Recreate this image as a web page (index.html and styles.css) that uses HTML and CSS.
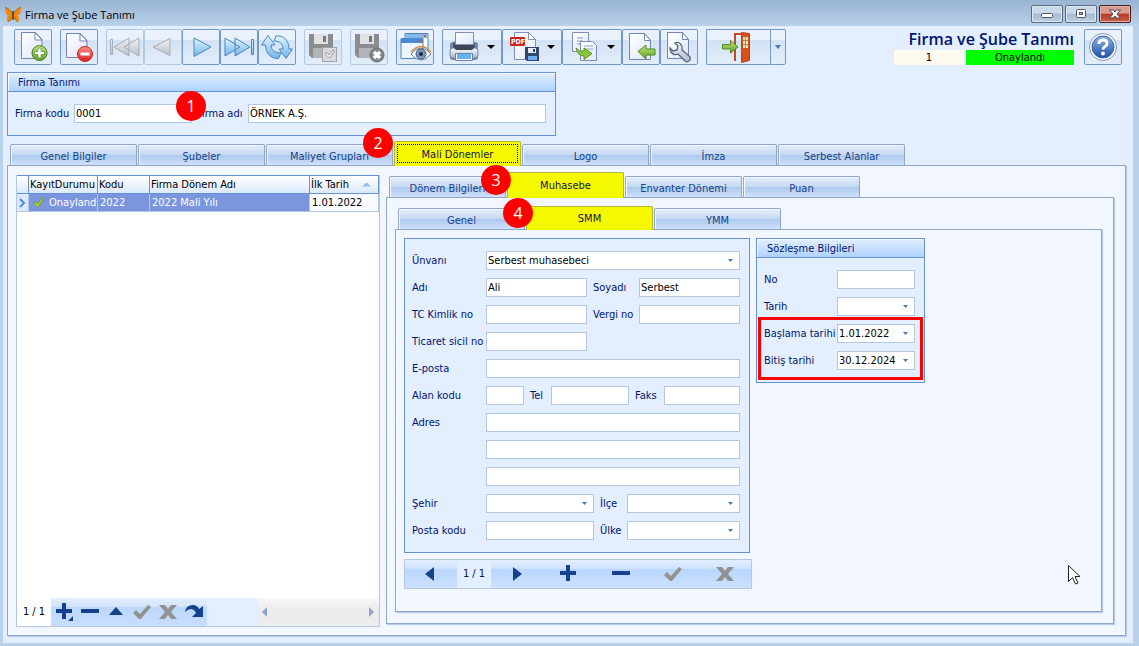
FILE: index.html
```html
<!DOCTYPE html>
<html lang="tr">
<head>
<meta charset="utf-8">
<title>Firma ve Şube Tanımı</title>
<link rel="stylesheet" href="styles.css">
</head>
<body>
<svg class="defs" aria-hidden="true">
  <defs>
    <linearGradient id="paper" x2="1" y2="1"><stop stop-color="#fff"/><stop offset="1" stop-color="#dfe6f5"/></linearGradient>
    <linearGradient id="blue" x2="0" y2="1"><stop stop-color="#e4f5ff"/><stop offset="1" stop-color="#6fb4e8"/></linearGradient>
    <linearGradient id="grey" x2="0" y2="1"><stop stop-color="#f1f2f4"/><stop offset="1" stop-color="#b9bec8"/></linearGradient>
    <linearGradient id="green" x2="0" y2="1"><stop stop-color="#c5e67a"/><stop offset="1" stop-color="#5fa322"/></linearGradient>
    <linearGradient id="red" x2="0" y2="1"><stop stop-color="#ff8f87"/><stop offset="1" stop-color="#dd2020"/></linearGradient>
    <linearGradient id="metal" x2="0" y2="1"><stop stop-color="#fafbfe"/><stop offset="1" stop-color="#a9b5cc"/></linearGradient>
    <linearGradient id="help" x2="0" y2="1"><stop stop-color="#8db5e8"/><stop offset="1" stop-color="#1f4fa8"/></linearGradient>
    <symbol id="tick" viewBox="0 0 18 16"><path d="M0 9l3-3 4 4L15 1l3 2L8 15H6z"/></symbol>
    <symbol id="cross" viewBox="0 0 18 16"><path d="M0 1h6l3 4 3-4h6l-6 7 6 7h-6l-3-4-3 4H0l6-7z"/></symbol>
  </defs>
</svg>
<div class="window">
  <header class="titlebar">
    <svg class="app-icon" viewBox="0 0 16 16" aria-hidden="true"><path d="M7.500 7C6 3 2 0 0 .5 0 5 1 8 3.500 8.500 1 10 1.500 13 3 15c2 0 4-3 4.500-5h1c.5 2 2.500 5 4.500 5 1.500-2 2-5-.5-6.500C15 8 16 5 16 .5 14 0 10 3 8.500 7z" fill="#f0890f"/><path d="M0 .5C4 1 6 4 8 8c2-4 4-7 8-7.500M3 15l4-5M13 15L9 10" fill="none" stroke="#a85a10" stroke-width=".8"/><path d="M8 4v9" stroke="#3b2817" stroke-width="1.300"/></svg>
    <span class="window-title">Firma ve Şube Tanımı</span>
    <div class="window-buttons">
      <button class="win" aria-label="Simge durumuna küçült"><svg viewBox="0 0 30 16"><rect x="9.500" y="7.500" width="11" height="4" rx="1" fill="#fff" stroke="#4c5663"/></svg></button>
      <button class="win" aria-label="Ekranı kapla"><svg viewBox="0 0 30 16"><rect x="10.500" y="3.500" width="9" height="8" rx="1" fill="#fff" stroke="#4c5663"/><rect x="13.500" y="6.500" width="3" height="2" fill="#a8bdd5" stroke="#4c5663"/></svg></button>
      <button class="win win-close" aria-label="Kapat"><svg viewBox="0 0 30 16"><path d="M9.500 4h4l1.500 2 1.500-2h4l-3.500 4 3.500 4h-4L15 10l-1.500 2h-4L13 8z" fill="#fff" stroke="#51434b"/></svg></button>
    </div>
  </header>

  <main class="client">
    <div class="toolbar">
      <div class="tool-group"><button class="tool" aria-label="Yeni"><svg viewBox="0 0 36 34"><path d="M6.500 2.500h14l6.500 7v19H6.500z" fill="url(#paper)" stroke="#7484b4"/><path d="M20 2.500v7.500h7z" fill="#fff" stroke="#7484b4"/><circle cx="24.500" cy="23" r="7.500" fill="url(#green)" stroke="#3e7d1c"/><path d="M23 18h3v3.500h3.500v3H26V28h-3v-3.500h-3.500v-3H23z" fill="#fff" stroke="#48832a" stroke-width=".6"/></svg></button></div>
      <div class="tool-group"><button class="tool" aria-label="Sil"><svg viewBox="0 0 36 34"><path d="M5.500 3.500h14l6.500 7v17H5.500z" fill="url(#paper)" stroke="#7484b4"/><path d="M19 3.500V11h7z" fill="#fff" stroke="#7484b4"/><circle cx="24" cy="24" r="7.500" fill="url(#red)" stroke="#c82424"/><rect x="19.500" y="22.500" width="9" height="3" fill="#fff"/></svg></button></div>
      <div class="tool-group">
        <button class="tool" disabled aria-label="İlk"><svg viewBox="0 0 36 34"><path d="M3.500 9.500h2v15h-2zM22 8v18L7 17zM32 8v18L17 17z" fill="url(#grey)" stroke="#a7acb7"/></svg></button>
        <button class="tool" disabled aria-label="Önceki"><svg viewBox="0 0 36 34"><path d="M25 8.500v17L8 17z" fill="url(#grey)" stroke="#a7acb7"/></svg></button>
        <button class="tool" aria-label="Sonraki"><svg viewBox="0 0 36 34"><path d="M11 8v18.500L28 17z" fill="url(#blue)" stroke="#4b86bd"/></svg></button>
        <button class="tool" aria-label="Son"><svg viewBox="0 0 36 34"><path d="M4 8v18l15-9zM14 8v18l15-9zM30.500 9.500h2v15h-2z" fill="url(#blue)" stroke="#4b86bd"/></svg></button>
        <button class="tool" aria-label="Yenile"><svg viewBox="0 0 36 34"><path d="M2.500 15L9 5.500l7 9.500h-4c0 5 4 8 10 8l-2.500 5.500C12 29 6.500 23 6.500 15z" fill="url(#blue)" stroke="#4b86bd"/><path d="M33.500 19L27 28.500 20 19h4c0-5-3-8-9-8l2-5c8-1 13 5 13 13z" fill="url(#blue)" stroke="#4b86bd"/></svg></button>
      </div>
      <div class="tool-group"><button class="tool" disabled aria-label="Kaydet"><svg viewBox="0 0 36 34"><path d="M4 4h24v24H7l-3-3z" fill="#8b8c90"/><path d="M9 4h14v10H9z" fill="#e1e2e4"/><path d="M18 6h3v6h-3z" fill="#77787d"/><path d="M8 18h16v10H8z" fill="#b3b4b7"/><rect x="17.500" y="17.500" width="14" height="14" fill="#d7d9dc" stroke="#a0a3a8"/><path d="M20 24l2-1.500 2 2.500 4-5 1.500 1-5 7z" fill="#fff" stroke="#93969b"/></svg></button></div>
      <div class="tool-group"><button class="tool" disabled aria-label="Vazgeç"><svg viewBox="0 0 36 34"><path d="M4 4h24v24H7l-3-3z" fill="#8b8c90"/><path d="M9 4h14v10H9z" fill="#e1e2e4"/><path d="M18 6h3v6h-3z" fill="#77787d"/><path d="M8 18h16v10H8z" fill="#b3b4b7"/><circle cx="26" cy="25" r="7" fill="#85878c" stroke="#696b70"/><path d="M23 22l6 6m0-6l-6 6" stroke="#fff" stroke-width="3.500"/></svg></button></div>
      <div class="tool-group"><button class="tool" aria-label="Önizleme"><svg viewBox="0 0 36 34"><path d="M8 3.500h23v18H8z" fill="#fff" stroke="#5481b5"/><path d="M8 4h23v4H8z" fill="#87b9ec"/><rect x="27" y="5" width="2" height="2" fill="#e64c32"/><path d="M4 8.500h22v20H4z" fill="#edf5ff" stroke="#5481b5"/><path d="M4 8h22v5H4z" fill="#468cd4"/><rect x="22" y="10" width="2" height="2" fill="#e64c32"/><path d="M14 24q10-12 20 0-10 12-20 0z" fill="#fff" stroke="#667a96"/><circle cx="24" cy="24" r="5" fill="#7b98ba" stroke="#42617f"/><circle cx="24" cy="24" r="2" fill="#1b2b42"/><path d="M14 22Q24 11 34 22" fill="none" stroke="#cf9149" stroke-width="1.500"/></svg></button></div>
      <div class="tool-group">
        <button class="tool tool-wide" aria-label="Yazdır"><svg viewBox="0 0 36 34"><rect x="4" y="12" width="28" height="18" rx="3" fill="#7886a5"/><path d="M7 14l2-3h18l2 3v5H7z" fill="#4b5567"/><path d="M9.500 2.500h18v12h-18z" fill="url(#paper)" stroke="#8190b2"/><rect x="4" y="18" width="28" height="10" rx="3" fill="url(#metal)" stroke="#7886a5"/><path d="M8 15h20v3l-2 2H10l-2-2z" fill="#3f4859"/><path d="M9.500 23.500h17v7h-17z" fill="#fff" stroke="#6b86b0"/><path d="M11 24h14v5H11z" fill="#63b5ee"/></svg><span class="caret"></span></button>
        <button class="tool tool-wide" aria-label="PDF kaydet"><svg viewBox="0 0 36 34"><path d="M8.500 2.500h14l7 7v20h-21z" fill="url(#paper)" stroke="#8290b9"/><path d="M22.500 2.500v7h7z" fill="#fff" stroke="#8290b9"/><rect x="4" y="7" width="15" height="9" rx="1" fill="#ca2525"/><text x="5" y="14" class="pdf">PDF</text><path d="M19 17h14v14H21l-2-2z" fill="#33446d"/><path d="M22 18h8v5h-8z" fill="#e6ecf7"/><path d="M27 19h2v3h-2z" fill="#33446d"/><path d="M22 26h9v4h-9z" fill="#6bb0ea"/></svg><span class="caret"></span></button>
        <button class="tool tool-wide" aria-label="Kopyala"><svg viewBox="0 0 36 34"><path d="M6.500 2.500h16v19h-16z" fill="url(#paper)" stroke="#7d8cb8"/><path d="M11 8h6m-6 3h6m-6 3h6" stroke="#8d9ac0"/><path d="M14.500 11.500h12l4 4v15h-16z" fill="url(#paper)" stroke="#7d8cb8"/><path d="M18 16h9m-9 3h9" stroke="#9aa6c5"/><path d="M10 18q3 4 8 3v-3l8 5.500-8 6v-3.500q-6 0-8-8z" fill="#8cc63c" stroke="#579225"/></svg><span class="caret"></span></button>
        <button class="tool" aria-label="Aktar"><svg viewBox="0 0 36 34"><path d="M6.500 3.500h15l6 7v19h-21z" fill="url(#paper)" stroke="#7484b4"/><path d="M21.500 3.500v7h6z" fill="#fff" stroke="#7484b4"/><path d="M15 21.500l8-6.500v4h9v6h-9v4z" fill="url(#green)" stroke="#4d8a24"/></svg></button>
        <button class="tool" aria-label="Ayarlar"><svg viewBox="0 0 36 34"><path d="M6.500 2.500h15l6 7v19h-21z" fill="url(#paper)" stroke="#7484b4"/><path d="M21.500 2.500v7h6z" fill="#fff" stroke="#7484b4"/><path d="M14 13l3 3-1 4-4 1-3-3c0 5 4 8 8 6l7 7q3 2 5-1 1-3-1-4l-7-6c1-5-3-9-7-7z" fill="url(#metal)" stroke="#56657f" stroke-width="1.300"/></svg></button>
      </div>
      <div class="tool-group">
        <button class="tool tool-exit" aria-label="Çıkış"><svg viewBox="0 0 36 34"><path d="M14 31V4h8" fill="none" stroke="#c44a25" stroke-width="2"/><path d="M20.500 2.500l8 1v27l-8 2z" fill="#d9501f" stroke="#b9411f"/><path d="M22 7h5v11h-5z" fill="#f4e4b6"/><path d="M22 10.500h5M22 14.500h5M24.500 7v11" stroke="#a98a60"/><path d="M1.500 14.500h8v-4L17 17l-7.500 6v-4h-8z" fill="url(#green)" stroke="#4d8a24"/></svg></button>
        <button class="tool tool-drop" aria-label="Çıkış seçenekleri"><span class="caret caret-blue"></span></button>
      </div>
      <div class="record">
        <h1>Firma ve Şube Tanımı</h1>
        <div class="record-state"><span class="record-no">1</span><span class="record-ok">Onaylandı</span></div>
      </div>
      <button class="tool" aria-label="Yardım"><svg viewBox="0 0 36 34"><circle cx="18" cy="17" r="13.500" fill="#fff" stroke="#7f93bb"/><circle cx="18" cy="17" r="11" fill="url(#help)" stroke="#3564ae"/><path d="M14 14q0-4 4-4t4 3.500q0 2-2 3-2 1-2 3" fill="none" stroke="#fff" stroke-width="3"/><circle cx="18" cy="23.500" r="2" fill="#fff"/></svg></button>
    </div>

    <section class="box company">
      <h2>Firma Tanımı</h2>
      <div class="company-row">
        <label for="kod">Firma kodu</label><input id="kod" class="kod" value="0001">
        <label for="ad" class="ad-label">Firma adı</label><input id="ad" class="ad" value="ÖRNEK A.Ş.">
        <span class="badge badge-1">1</span>
      </div>
    </section>

    <div class="tabs tabs-main" role="tablist">
      <button class="tab" role="tab">Genel Bilgiler</button>
      <button class="tab" role="tab">Şubeler</button>
      <button class="tab" role="tab">Maliyet Grupları</button>
      <div class="slot"><button class="tab active" role="tab" aria-selected="true">Mali Dönemler</button><span class="badge badge-2">2</span></div>
      <button class="tab" role="tab">Logo</button>
      <button class="tab" role="tab">İmza</button>
      <button class="tab" role="tab">Serbest Alanlar</button>
    </div>
    <div class="panel panel-main">
      <section class="periods">
        <table>
          <colgroup><col class="c-mark"><col class="c-state"><col class="c-code"><col><col class="c-date"></colgroup>
          <thead><tr><th></th><th>KayıtDurumu</th><th>Kodu</th><th>Firma Dönem Adı</th><th><span class="sorted">İlk Tarih</span></th></tr></thead>
          <tbody><tr class="selected"><td class="mark"><svg viewBox="0 0 10 12"><path d="M3 2l4 4-4 4" fill="none" stroke="#4b8fe0" stroke-width="2"/></svg></td><td class="state"><svg viewBox="0 0 18 16"><path d="M1 9l3-2 3 3 7-9 2 1-8 13H6z" fill="#a8cf3e" stroke="#628c2c"/></svg>Onayland</td><td>2022</td><td>2022 Mali Yılı</td><td class="plain">1.01.2022</td></tr></tbody>
        </table>
        <div class="periods-foot">
          <span class="count">1 / 1</span>
          <div class="mini-nav">
            <button aria-label="Ekle"><svg viewBox="0 0 20 20"><path d="M8 1h4v6h6v4h-6v6H8v-6H2V7h6zM19 14v5h-5z"/></svg></button>
            <button aria-label="Sil"><svg viewBox="0 0 20 20"><path d="M1 7h18v4H1z"/></svg></button>
            <button aria-label="Düzenle"><svg viewBox="0 0 20 20"><path d="M10 5l7 8H3z"/></svg></button>
            <button aria-label="Onayla" disabled><svg viewBox="0 0 20 20"><use href="#tick" x="1" y="2" width="18" height="16"/></svg></button>
            <button aria-label="Vazgeç" disabled><svg viewBox="0 0 20 20"><use href="#cross" x="1" y="2" width="18" height="16"/></svg></button>
            <button aria-label="Yenile"><svg viewBox="0 0 20 20"><path d="M1 10Q2 3 9 3q4 0 6 4l4-3v11H8l4-4Q10 7 7 7 4 7 1 10z"/></svg></button>
          </div>
          <div class="scroll"><button aria-label="Sola"><svg viewBox="0 0 6 10"><path d="M5 0v10L0 5z"/></svg></button><button aria-label="Sağa"><svg viewBox="0 0 6 10"><path d="M1 0v10l5-5z"/></svg></button></div>
        </div>
      </section>

      <section class="detail">
        <div class="tabs tabs-detail" role="tablist">
          <button class="tab" role="tab">Dönem Bilgileri</button>
          <div class="slot"><button class="tab active" role="tab" aria-selected="true">Muhasebe</button><span class="badge badge-3">3</span></div>
          <button class="tab" role="tab">Envanter Dönemi</button>
          <button class="tab" role="tab">Puan</button>
        </div>
        <div class="panel panel-detail">
          <div class="tabs tabs-inner" role="tablist">
            <button class="tab" role="tab">Genel</button>
            <div class="slot"><button class="tab active" role="tab" aria-selected="true">SMM</button><span class="badge badge-4">4</span></div>
            <button class="tab" role="tab">YMM</button>
          </div>
          <div class="panel panel-inner">
            <div class="person">
              <form class="box form">
                <div class="row"><label class="first" for="unvan">Ünvanı</label><span class="combo grow"><select id="unvan"><option>Serbest muhasebeci</option></select></span></div>
                <div class="row"><label class="first" for="adi">Adı</label><input id="adi" class="grow" value="Ali"><label class="second" for="soyadi">Soyadı</label><input id="soyadi" class="grow" value="Serbest"></div>
                <div class="row"><label class="first" for="tc">TC Kimlik no</label><input id="tc" class="grow"><label class="second" for="vergi">Vergi no</label><input id="vergi" class="grow"></div>
                <div class="row"><label class="first" for="sicil">Ticaret sicil no</label><input id="sicil" class="registry"></div>
                <div class="row"><label class="first" for="eposta">E-posta</label><input id="eposta" class="grow"></div>
                <div class="row"><label class="first" for="alan">Alan kodu</label><input id="alan" class="area"><label class="tel-label" for="tel">Tel</label><input id="tel" class="tel"><label class="fax-label" for="faks">Faks</label><input id="faks" class="grow"></div>
                <div class="row"><label class="first" for="adres">Adres</label><input id="adres" class="grow"></div>
                <div class="row"><span class="first"></span><input class="grow" aria-label="Adres 2"></div>
                <div class="row"><span class="first"></span><input class="grow" aria-label="Adres 3"></div>
                <div class="row"><label class="first" for="sehir">Şehir</label><span class="combo city"><select id="sehir"><option></option></select></span><label class="short" for="ilce">İlçe</label><span class="combo grow"><select id="ilce"><option></option></select></span></div>
                <div class="row"><label class="first" for="posta">Posta kodu</label><input id="posta" class="city"><label class="short" for="ulke">Ülke</label><span class="combo grow"><select id="ulke"><option></option></select></span></div>
              </form>
              <nav class="record-nav">
                <button aria-label="Önceki"><svg viewBox="0 0 20 20"><path d="M13 3v14L4 10z"/></svg></button>
                <span>1 / 1</span>
                <button aria-label="Sonraki"><svg viewBox="0 0 20 20"><path d="M6 3v14l9-7z"/></svg></button>
                <button aria-label="Ekle"><svg viewBox="0 0 20 20"><path d="M7 1h4v6h6v4h-6v6H7v-6H1V7h6z"/></svg></button>
                <button aria-label="Sil"><svg viewBox="0 0 20 20"><path d="M1 7h18v4H1z"/></svg></button>
                <button aria-label="Onayla" disabled><svg viewBox="0 0 20 20"><use href="#tick" x="1" y="2" width="18" height="16"/></svg></button>
                <button aria-label="Vazgeç" disabled><svg viewBox="0 0 20 20"><use href="#cross" x="1" y="2" width="18" height="16"/></svg></button>
              </nav>
            </div>
            <section class="box contract">
              <h2>Sözleşme Bilgileri</h2>
              <div class="contract-body">
                <div class="row"><label for="no">No</label><input id="no"></div>
                <div class="row"><label for="tarih">Tarih</label><span class="combo"><select id="tarih"><option></option></select></span></div>
                <div class="row"><label for="bas">Başlama tarihi</label><span class="combo"><select id="bas"><option>1.01.2022</option></select></span></div>
                <div class="row"><label for="bitis">Bitiş tarihi</label><span class="combo"><select id="bitis"><option>30.12.2024</option></select></span></div>
              </div>
              <div class="highlight"></div>
            </section>
          </div>
        </div>
      </section>
    </div>
  </main>
  <svg class="pointer" viewBox="0 0 13 20" aria-hidden="true"><path d="M.5.500v16l4-4 3 6.500 2.500-1-3-6.500H12z" fill="#fff" stroke="#222"/></svg>
</div>
</body>
</html>
```
FILE: styles.css
```css
* { box-sizing: border-box; }

body {
  margin: 0;
  font: 11px/14px "DejaVu Sans Condensed", Roboto, sans-serif;
  color: #00156e;
}

button, input, select { font: inherit; margin: 0; padding: 0; }
svg { display: block; }
.defs { position: absolute; width: 0; height: 0; }

.window {
  position: relative;
  display: flex;
  flex-direction: column;
  min-height: 100vh;
  padding: 0 6px 3px 3px;
  background: linear-gradient(#99b4d1, #b9d1ea 26px, #b9d1ea);
}

/* Title bar */
.titlebar { display: flex; align-items: center; height: 26px; padding: 0 2px; }
.app-icon { width: 16px; height: 16px; margin-top: 3px; }
.window-title { flex: 1; margin: 4px 0 0 4px; font: 11px/16px "Open Sans", sans-serif; color: #000; }
.window-buttons { display: flex; gap: 2px; margin-top: 2px; }
.win {
  width: 32px;
  height: 18px;
  border: 1px solid #596b80;
  border-radius: 2px;
  background: linear-gradient(#c9d9ea 45%, #a3bad3 50%, #bcd0e5);
  box-shadow: inset 0 0 0 1px #dce8f4;
}
.win svg { width: 30px; height: 16px; }
.win-close { border-color: #4a1a1e; background: linear-gradient(#d99a90 45%, #b83a25 50%, #c9604b); box-shadow: inset 0 0 0 1px #e3b0a6; }

.client {
  flex: 1;
  display: flex;
  flex-direction: column;
  padding: 3px 7px 7px 4px;
  background: #e3eeff;
}

/* Toolbar */
.toolbar { display: flex; gap: 8px; padding: 0 4px 0 7px; }
.tool-group { display: flex; }
.tool {
  display: flex;
  align-items: center;
  width: 38px;
  height: 36px;
  border: 1px solid #7599c6;
  border-radius: 2px;
  background: linear-gradient(#e8f1fc 28%, #d3e2f4 30%, #e2edfa);
}
.tool svg { flex: none; width: 36px; height: 34px; }
.tool:disabled { border-color: #b4c8e2; }
.tool-wide { width: 60px; }
.tool-wide svg { margin-left: 3px; }
.tool-exit { width: 64px; border-radius: 2px 0 0 2px; border-right: 0; }
.tool-exit svg { margin-left: 14px; }
.tool-drop { width: 16px; justify-content: center; border-radius: 0 2px 2px 0; }
.caret { width: 8px; height: 4px; margin-left: 5px; background: #000; clip-path: polygon(0 0, 100% 0, 50% 100%); }
.caret-blue { width: 6px; margin: 0; background: #4a78b5; }
.pdf { font: bold 7px "DejaVu Sans Condensed", sans-serif; fill: #fff; }
.record { flex: 1; display: flex; flex-direction: column; justify-content: space-between; align-items: flex-end; margin-right: 2px; }
.record h1 { margin: 0; font: 600 16px/21px "Open Sans", sans-serif; }
.record-state { display: flex; gap: 2px; color: #000; text-align: center; line-height: 15px; }
.record-no { width: 70px; background: #fffaf0; }
.record-ok { width: 108px; background: #0f0; }

/* Boxes and fields */
.box { position: relative; border: 1px solid #6593cf; background: #e3eeff; }
.box h2 {
  height: 19px;
  margin: 0;
  padding-left: 10px;
  border-bottom: 1px solid #6593cf;
  background: linear-gradient(#e3efff, #afd2ff);
  box-shadow: inset 1px 1px #f5f9ff;
  font: inherit;
  line-height: 20px;
}
input, select {
  width: 100%;
  min-width: 0;
  height: 19px;
  padding: 0 1px;
  border: 1px solid #b3c7e1;
  border-radius: 0;
  background: #fff;
  color: #000;
}
select { appearance: none; }
.combo { position: relative; display: block; }
.combo::after {
  content: "";
  position: absolute;
  top: 8px;
  right: 7px;
  width: 5px;
  height: 3px;
  background: #4a78b5;
  clip-path: polygon(0 0, 100% 0, 50% 100%);
}
label { white-space: nowrap; }

.company { width: 549px; margin-top: 7px; }
.company-row { position: relative; display: flex; align-items: center; padding: 12px 9px 12px 7px; }
.company-row label { flex: 0 0 59px; }
.company-row .ad-label { flex-basis: 51px; margin-left: 5px; }
.company-row .kod { width: 118px; }
.company-row .ad { flex: 1; }

.badge {
  position: absolute;
  z-index: 3;
  width: 30px;
  height: 30px;
  border-radius: 50%;
  background: #f00;
  color: #fff;
  font: 16px/30px "Open Sans", sans-serif;
  text-align: center;
}
.badge-1 { left: 168px; top: -1px; }
.badge-2 { left: -31px; top: -13px; }
.badge-3 { left: -26px; top: -7px; }
.badge-4 { left: -23px; top: -8px; }

/* Tabs */
.tabs { display: flex; align-items: flex-end; gap: 1px; padding-left: 3px; }
.slot { position: relative; z-index: 2; margin-bottom: -1px; }
.tab {
  width: 127px;
  height: 21px;
  border: 1px solid #8fa5c9;
  border-bottom: 0;
  border-radius: 2px 2px 0 0;
  background: linear-gradient(#e3edfa, #c6daf3 48%, #adc9ec 52%, #cfe1fb);
  box-shadow: inset 1px 1px #f4f8ff;
  color: #15428b;
  line-height: 23px;
}
.tab.active { display: block; height: 24px; background: #f5f900; box-shadow: none; border-color: #b3b733; color: #15154a; }
.tabs-main { margin-top: 5px; height: 24px; }
.tabs-main .active { height: 25px; outline: 1px dotted #000; outline-offset: -4px; }
.tabs-detail { height: 25px; }
.tabs-detail .tab { width: 117px; }
.tabs-detail .active { height: 26px; }
.tabs-inner { height: 23px; }

.panel { flex: 1; border: 1px solid #8fa5c9; background: #f2f7ff; box-shadow: 1px 1px 1px #b9cde9; }
.panel-main { display: flex; gap: 6px; padding: 6px 11px 8px 8px; }
.detail { flex: 1; display: flex; flex-direction: column; padding-bottom: 3px; }
.panel-detail { display: flex; flex-direction: column; padding: 8px 11px 11px 8px; }
.panel-inner { display: flex; align-items: flex-start; gap: 4px; padding: 8px; }

/* Period list */
.periods { display: flex; flex-direction: column; justify-content: space-between; width: 364px; margin-top: 3px; border: 1px solid #b3c7e1; background: #fff; color: #000; }
table { width: 100%; table-layout: fixed; border-collapse: separate; border-spacing: 0; }
.c-mark { width: 12px; }
.c-state { width: 69px; }
.c-code { width: 52px; }
.c-date { width: 69px; }
th, td { height: 18px; padding: 0 2px; border-right: 1px solid #6593cf; border-bottom: 1px solid #6593cf; overflow: hidden; white-space: nowrap; text-align: left; font-weight: normal; }
th { background: linear-gradient(#fff, #dbe9fb); padding: 0 1px; border-top: 0; box-shadow: 0 -1px #6593cf; }
.sorted { display: flex; align-items: center; justify-content: space-between; padding-right: 6px; }
.sorted::after { content: ""; width: 9px; height: 4px; background: #91bdf0; clip-path: polygon(50% 0, 100% 100%, 0 100%); }
.selected td { background: #7b96df; color: #fff; border-color: #b3c7e1; }
.selected .mark { padding: 0; background: #dbe9fb; }
.mark svg { width: 10px; height: 12px; }
.selected .plain { background: #f7fbff; color: #000; }
.state svg { display: inline-block; width: 12px; height: 11px; margin: 0 4px 0 2px; vertical-align: -2px; }
.periods-foot { display: flex; height: 28px; background: #e3eeff; }
.count { width: 34px; background: #fff; line-height: 28px; text-align: center; }
.mini-nav { display: flex; margin-right: 50px; background: linear-gradient(#e3eeff, #d3e4fb 30%, #bcd7fc 32%, #c7deff); }
.mini-nav button { width: 26px; padding: 0 3px; }
.mini-nav button, .record-nav button, .scroll button { border: 0; background: none; fill: #15428b; }
.mini-nav svg, .record-nav svg { width: 20px; height: 20px; }
.mini-nav button:disabled, .record-nav button:disabled { fill: #929292; }
.scroll { flex: 1; display: flex; justify-content: space-between; padding: 0 5px; background: linear-gradient(#f8f8f8, #ececec 40%); }
.scroll button { fill: #91a3cd; }
.scroll svg { width: 6px; height: 10px; }

/* Accountant form */
.person { display: flex; flex-direction: column; gap: 6px; width: 348px; }
.form { display: flex; flex-direction: column; gap: 8px; width: 346px; padding: 12px 9px 12px 7px; }
.row { display: flex; align-items: center; }
.first { flex: 0 0 74px; }
.grow { flex: 1; }
.second { flex: 0 0 52px; padding-left: 6px; }
.row .registry { width: 101px; }
.row .area { width: 38px; }
.row .tel { width: 78px; }
.row .city { width: 108px; }
.tel-label { flex: 0 0 27px; padding-left: 6px; }
.fax-label { flex: 0 0 35px; padding-left: 6px; }
.short { flex: 0 0 33px; padding-left: 6px; }

.record-nav { display: flex; height: 30px; border: 1px solid #b3c7e1; background: linear-gradient(#e3eeff, #d0e3fd 30%, #b9d6fe 34%, #cde1fd); }
.record-nav button { display: flex; flex: 1; justify-content: center; padding-top: 4px; }
.record-nav span { width: 34px; background: #e3eeff; line-height: 28px; text-align: center; }

.contract { width: 169px; }
.contract-body { display: flex; flex-direction: column; gap: 8px; padding: 12px 9px 12px 7px; }
.contract-body label { flex: 0 0 73px; }
.contract-body .combo { flex: 1; }
.highlight { position: absolute; left: 1px; top: 78px; width: 165px; height: 63px; border: 3px solid #f00; pointer-events: none; }

.pointer { position: absolute; left: 1068px; top: 565px; width: 13px; height: 20px; }
```
